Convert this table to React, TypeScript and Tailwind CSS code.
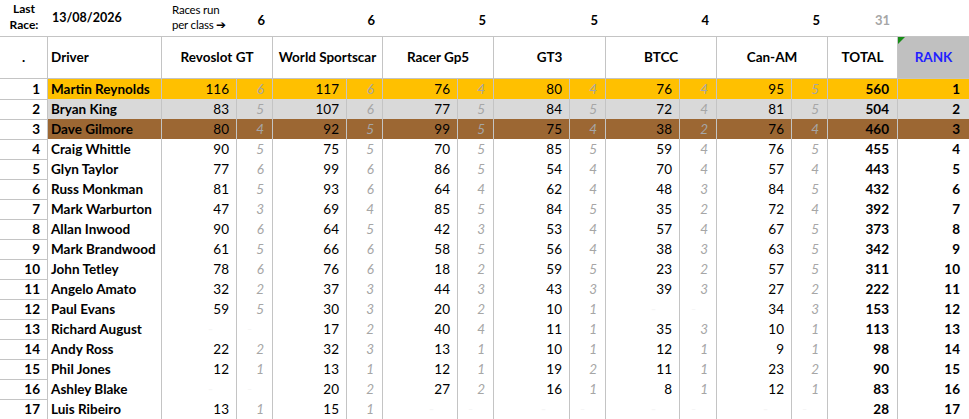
import React from "react";

type Row = {
  pos: number;
  name: string;
  scores: ([number, number] | null)[];
  total: number;
};

const rows: Row[] = [
  { pos: 1, name: "Martin Reynolds", scores: [[116, 6], [117, 6], [76, 4], [80, 4], [76, 4], [95, 5]], total: 560 },
  { pos: 2, name: "Bryan King", scores: [[83, 5], [107, 6], [77, 5], [84, 5], [72, 4], [81, 5]], total: 504 },
  { pos: 3, name: "Dave Gilmore", scores: [[80, 4], [92, 5], [99, 5], [75, 4], [38, 2], [76, 4]], total: 460 },
  { pos: 4, name: "Craig Whittle", scores: [[90, 5], [75, 5], [70, 5], [85, 5], [59, 4], [76, 5]], total: 455 },
  { pos: 5, name: "Glyn Taylor", scores: [[77, 6], [99, 6], [86, 5], [54, 4], [70, 4], [57, 4]], total: 443 },
  { pos: 6, name: "Russ Monkman", scores: [[81, 5], [93, 6], [64, 4], [62, 4], [48, 3], [84, 5]], total: 432 },
  { pos: 7, name: "Mark Warburton", scores: [[47, 3], [69, 4], [85, 5], [84, 5], [35, 2], [72, 4]], total: 392 },
  { pos: 8, name: "Allan Inwood", scores: [[90, 6], [64, 5], [42, 3], [53, 4], [57, 4], [67, 5]], total: 373 },
  { pos: 9, name: "Mark Brandwood", scores: [[61, 5], [66, 6], [58, 5], [56, 4], [38, 3], [63, 5]], total: 342 },
  { pos: 10, name: "John Tetley", scores: [[78, 6], [76, 6], [18, 2], [59, 5], [23, 2], [57, 5]], total: 311 },
  { pos: 11, name: "Angelo Amato", scores: [[32, 2], [37, 3], [44, 3], [43, 3], [39, 3], [27, 2]], total: 222 },
  { pos: 12, name: "Paul Evans", scores: [[59, 5], [30, 3], [20, 2], [10, 1], null, [34, 3]], total: 153 },
  { pos: 13, name: "Richard August", scores: [null, [17, 2], [40, 4], [11, 1], [35, 3], [10, 1]], total: 113 },
  { pos: 14, name: "Andy Ross", scores: [[22, 2], [32, 3], [13, 1], [10, 1], [12, 1], [9, 1]], total: 98 },
  { pos: 15, name: "Phil Jones", scores: [[12, 1], [13, 1], [12, 1], [19, 2], [11, 1], [23, 2]], total: 90 },
  { pos: 16, name: "Ashley Blake", scores: [null, [20, 2], [27, 2], [16, 1], [8, 1], [12, 1]], total: 83 },
  { pos: 17, name: "Luis Ribeiro", scores: [[13, 1], [15, 1], null, null, null, null], total: 28 },
];

const classes = ["Revoslot GT", "World Sportscar", "Racer Gp5", "GT3", "BTCC", "Can-AM"];
const racesRun = [6, 6, 5, 5, 4, 5];

const grid =
  "grid grid-cols-[48px_114px_75px_36px_74px_36px_75px_36px_76px_36px_74px_37px_75px_36px_70px_71px]";

const rowBg = (pos: number) =>
  pos === 1 ? "bg-[#ffc000]" : pos === 2 ? "bg-[#d9d9d9]" : pos === 3 ? "bg-[#9c6733]" : "bg-white";

const cell = "border-r border-b border-[#c4c4c4] flex items-center";

const App = () => {
  return (
    <div className="w-[969px] h-[419px] overflow-hidden bg-white text-black font-['Lato',sans-serif]">
      {/* top info strip */}
      <div className={`${grid} h-[36px]`}>
        <div className="flex flex-col items-center pt-[1px] text-[12px] font-bold leading-[16px]">
          <span>Last</span>
          <span>Race:</span>
        </div>
        <div className="flex items-center pl-[4px] text-[12.5px] font-bold">13/08/2026</div>
        <div className="flex flex-col pl-[10px] pt-[2px] text-[11.5px] leading-[15px] whitespace-nowrap tracking-[-0.2px]">
          <span>Races run</span>
          <span>per class ➔</span>
        </div>
        {racesRun.map((n, i) => (
          <React.Fragment key={i}>
            {i > 0 && <div />}
            <div className="flex items-end justify-end pr-[8px] pb-[6px] text-[13px] font-bold">{n}</div>
          </React.Fragment>
        ))}
        <div className="flex items-end justify-end pr-[8px] pb-[6px] text-[13px] font-bold text-[#a6a6a6]">31</div>
        <div />
      </div>

      {/* header row */}
      <div className={`${grid} h-[43px] border-t border-[#c4c4c4] text-[13.5px] font-bold`}>
        <div className={`${cell} justify-center`}>.</div>
        <div className={`${cell} pl-[3px]`}>Driver</div>
        {classes.map((c) => (
          <div key={c} className={`${cell} col-span-2 justify-center whitespace-nowrap`}>
            {c}
          </div>
        ))}
        <div className={`${cell} justify-center`}>TOTAL</div>
        <div className="relative flex items-center justify-center border-b border-[#c4c4c4] bg-[#c0c0c0] text-[#1f1fff]">
          <span className="absolute left-0 top-0 h-0 w-0 border-t-[7px] border-r-[7px] border-t-[#168c16] border-r-transparent" />
          RANK
        </div>
      </div>

      {/* data rows */}
      {rows.map((r) => {
        const bg = rowBg(r.pos);
        return (
          <div key={r.pos} className={`${grid} h-[20px] text-[13.5px]`}>
            <div className={`${cell} justify-end pr-[7px] font-bold`}>{r.pos}</div>
            <div className={`${cell} ${bg} pl-[3px] font-bold whitespace-nowrap`}>{r.name}</div>
            {r.scores.map((s, i) => (
              <React.Fragment key={i}>
                <div className={`${cell} ${bg} justify-end pr-[7px]`}>
                  {s ? s[0] : <span className="pr-[16px] text-[#f6f6f6]">-</span>}
                </div>
                <div className={`${cell} ${bg} justify-end pr-[8px] italic text-[#a6a6a6]`}>
                  {s ? s[1] : <span className="pr-[12px] text-[#f6f6f6]">-</span>}
                </div>
              </React.Fragment>
            ))}
            <div className={`${cell} ${bg} justify-end pr-[8px] font-bold`}>{r.total}</div>
            <div className={`flex items-center border-b border-[#c4c4c4] ${bg} justify-end pr-[9px] font-bold`}>
              {r.pos}
            </div>
          </div>
        );
      })}
    </div>
  );
};

export default App;
